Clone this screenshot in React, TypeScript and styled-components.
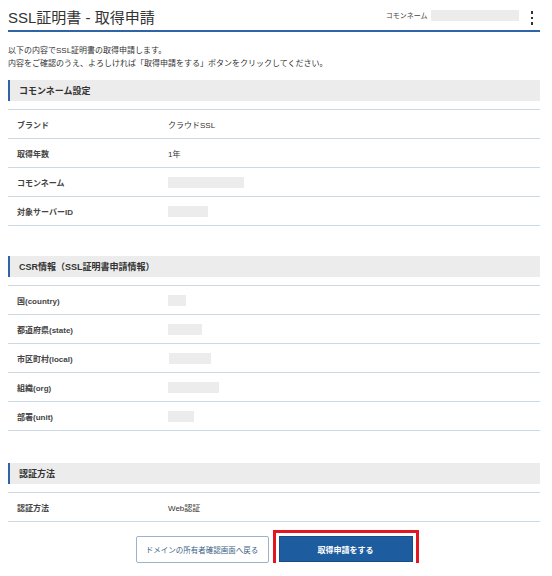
import React, { FC } from 'react'
import styled, { createGlobalStyle } from 'styled-components'

const GlobalStyle = createGlobalStyle`
  body {
    margin: 0;
    background: #fff;
    font-family: "Liberation Sans", "Noto Sans CJK JP", sans-serif;
    color: #333;
  }
`

const Page = styled.div`
  width: 532px;
  margin-left: 8px;
`

const TopBar = styled.header`
  display: flex;
  align-items: center;
  justify-content: space-between;
  height: 30px;
  border-bottom: 2px solid #2f64a6;
`

const Title = styled.h1`
  margin: 0;
  font-size: 15px;
  font-weight: 400;
  color: #333;
  padding-top: 3px;
`

const TopRight = styled.div`
  display: flex;
  align-items: center;
  gap: 3px;
  font-size: 7px;
  color: #444;
`

const Masked = styled.span<{ $w: number }>`
  display: inline-block;
  width: ${(p) => p.$w}px;
  height: 11px;
  background: #ececec;
  vertical-align: middle;
`

const Kebab = styled.span`
  display: flex;
  flex-direction: column;
  gap: 3px;
  margin: 0 7px 0 9px;
  padding-top: 6px;

  i {
    display: block;
    width: 2.5px;
    height: 2.5px;
    background: #333;
  }
`

const Intro = styled.p`
  margin: 12px 0 0;
  font-size: 8px;
  line-height: 13px;
`

const Section = styled.section<{ $mt: number }>`
  margin-top: ${(p) => p.$mt}px;
`

const SectionHeader = styled.h2`
  margin: 0;
  height: 21px;
  display: flex;
  align-items: center;
  padding-left: 9px;
  background: #ececec;
  border-left: 2px solid #2f64a6;
  font-size: 9px;
  font-weight: 700;
  color: #333;
`

const Table = styled.div`
  margin-top: 8px;
  border-top: 1px solid #cbd8e6;
`

const Row = styled.div`
  display: grid;
  grid-template-columns: 160px 1fr;
  align-items: center;
  height: 29px;
  box-sizing: border-box;
  border-bottom: 1px solid #cbd8e6;
  font-size: 8px;
`

const Label = styled.div`
  padding-left: 9px;
  font-weight: 700;
  color: #444;
`

const Value = styled.div<{ $dx?: number }>`
  padding-left: ${(p) => p.$dx ?? 0}px;
  color: #333;
`

const Actions = styled.div`
  display: flex;
  justify-content: center;
  gap: 10px;
  margin-top: 14px;
`

const BackButton = styled.button`
  width: 133px;
  height: 27px;
  background: #fff;
  border: 1px solid #9db3cc;
  border-radius: 2px;
  color: #3d5f86;
  font-family: inherit;
  font-size: 7.5px;
  cursor: pointer;
`

const SubmitButton = styled.button`
  width: 134px;
  height: 26px;
  background: #1d5c9e;
  border: 1px solid #174d86;
  border-radius: 0;
  color: #fff;
  font-family: inherit;
  font-size: 8px;
  font-weight: 700;
  outline: 3px solid #e3151f;
  outline-offset: 3px;
  cursor: pointer;
`

type Item = { label: string; value?: string; mask?: number; dx?: number }

const common: Item[] = [
  { label: 'ブランド', value: 'クラウドSSL' },
  { label: '取得年数', value: '1年' },
  { label: 'コモンネーム', mask: 76 },
  { label: '対象サーバーID', mask: 40 },
]

const csr: Item[] = [
  { label: '国(country)', mask: 18 },
  { label: '都道府県(state)', mask: 34 },
  { label: '市区町村(local)', mask: 42, dx: 1 },
  { label: '組織(org)', mask: 51 },
  { label: '部署(unit)', mask: 26 },
]

const auth: Item[] = [{ label: '認証方法', value: 'Web認証' }]

const InfoTable: FC<{ items: Item[] }> = ({ items }) => (
  <Table>
    {items.map((it) => (
      <Row key={it.label}>
        <Label>{it.label}</Label>
        <Value $dx={it.dx}>{it.mask ? <Masked $w={it.mask} /> : it.value}</Value>
      </Row>
    ))}
  </Table>
)

const App: FC = () => (
  <Page>
    <GlobalStyle />
    <TopBar>
      <Title>SSL証明書 - 取得申請</Title>
      <TopRight>
        コモンネーム
        <Masked $w={88} />
        <Kebab>
          <i />
          <i />
          <i />
        </Kebab>
      </TopRight>
    </TopBar>
    <Intro>
      以下の内容でSSL証明書の取得申請します。
      <br />
      内容をご確認のうえ、よろしければ「取得申請をする」ボタンをクリックしてください。
    </Intro>
    <Section $mt={10}>
      <SectionHeader>コモンネーム設定</SectionHeader>
      <InfoTable items={common} />
    </Section>
    <Section $mt={30}>
      <SectionHeader>CSR情報（SSL証明書申請情報）</SectionHeader>
      <InfoTable items={csr} />
    </Section>
    <Section $mt={32}>
      <SectionHeader>認証方法</SectionHeader>
      <InfoTable items={auth} />
    </Section>
    <Actions>
      <BackButton>ドメインの所有者確認画面へ戻る</BackButton>
      <SubmitButton>取得申請をする</SubmitButton>
    </Actions>
  </Page>
)

export default App
